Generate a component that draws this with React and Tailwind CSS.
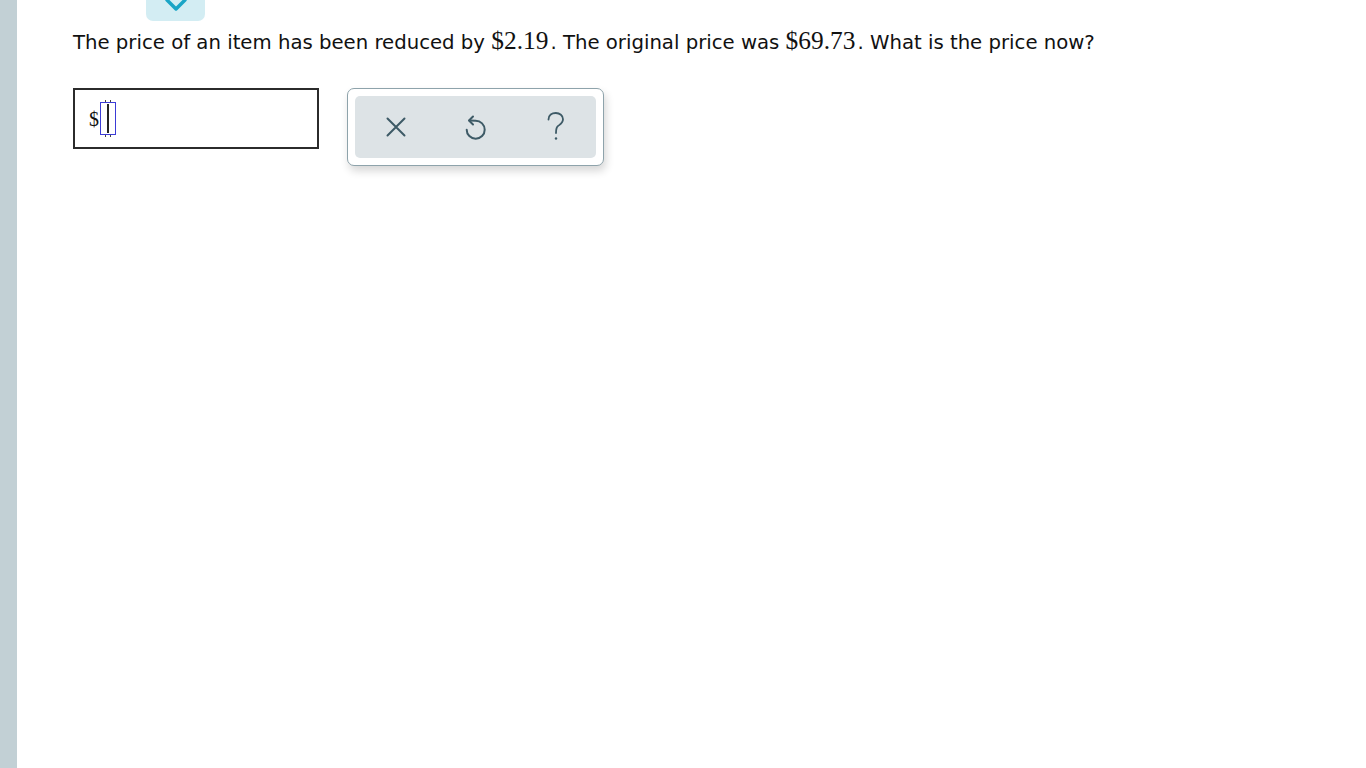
import React from "react";

export default function App() {
  return (
    <div className="flex min-h-[768px] w-full bg-white" style={{ fontFamily: '"DejaVu Sans", Verdana, sans-serif' }}>
      <div className="w-[17px] shrink-0 bg-[#c2d0d5]" />
      <div className="flex-1 pl-[56px]">
        <div className="ml-[73px] flex h-[21px] w-[59px] items-start justify-center rounded-b-[7px] bg-[#d3edf3]">
          <svg width="26" height="14" viewBox="0 0 26 14" className="-mt-[1px]">
            <path d="M4 1 L13 10 L22 1" fill="none" stroke="#1ba5c6" strokeWidth="3.5" strokeLinecap="round" strokeLinejoin="round" />
          </svg>
        </div>
        <p className="mt-[7px] text-[19.7px] leading-[28px] text-[#111]">
          The price of an item has been reduced by{" "}
          <span className="mr-[2px] text-[25.4px] leading-none" style={{ fontFamily: '"Liberation Serif", serif' }}>$2.19</span>. The original price was{" "}
          <span className="mr-[2px] text-[25.4px] leading-none" style={{ fontFamily: '"Liberation Serif", serif' }}>$69.73</span>. What is the price now?
        </p>
        <div className="mt-[31px] flex items-start gap-[28px]">
          <div className="flex h-[61px] w-[246px] items-center border-2 border-[#2b2b2b] pl-[14px]">
            <span className="text-[20px] text-[#111]" style={{ fontFamily: '"Liberation Serif", serif' }}>$</span>
            <div className="relative ml-[1px] h-[33px] w-[16px] border border-[#3b3bd6]">
              <div className="absolute left-[6px] top-[1px] h-[29px] w-[1.5px] bg-[#222]" />
              <div className="absolute -top-[3px] left-[4px] h-[2px] w-[6px] border-x border-[#444]" />
              <div className="absolute -bottom-[3px] left-[4px] h-[2px] w-[6px] border-x border-[#444]" />
            </div>
          </div>
          <div className="rounded-[7px] border border-[#8ea3ab] bg-white p-[7px] shadow-[2px_5px_8px_rgba(0,0,0,0.16)]">
            <div className="flex h-[62px] w-[241px] items-center justify-center rounded-[5px] bg-[#dde3e6]">
              <div className="flex w-[80px] justify-center">
                <svg width="20" height="20" viewBox="0 0 20 20" fill="none" stroke="#3d5a66" strokeWidth="2" strokeLinecap="round">
                  <path d="M1.5 1.5 L18.5 18.5 M18.5 1.5 L1.5 18.5" />
                </svg>
              </div>
              <div className="flex w-[80px] justify-center">
                <svg width="26" height="30" viewBox="464 114 26 30" fill="none" stroke="#3d5a66" strokeWidth="2" strokeLinecap="round" strokeLinejoin="round">
                  <path d="M474 118.5 L470 122.5 L474 126.5" />
                  <path d="M470.5 122.6 L476.7 122.7 A9 9 0 1 1 467.7 131.7" />
                </svg>
              </div>
              <div className="flex w-[80px] justify-center">
                <svg width="20" height="32" viewBox="545 112 20 32" fill="none" stroke="#3d5a66" strokeWidth="1.8" strokeLinecap="round">
                  <path d="M547.5 120.5 C547.5 116 551 114 554.8 114 C558.8 114 562 116.5 562 120.3 C562 124 559 125.5 557 127 C555.3 128.3 555 129.8 555 134" />
                  <circle cx="555" cy="139.5" r="1.2" fill="#3d5a66" stroke="none" />
                </svg>
              </div>
            </div>
          </div>
        </div>
      </div>
    </div>
  );
}
